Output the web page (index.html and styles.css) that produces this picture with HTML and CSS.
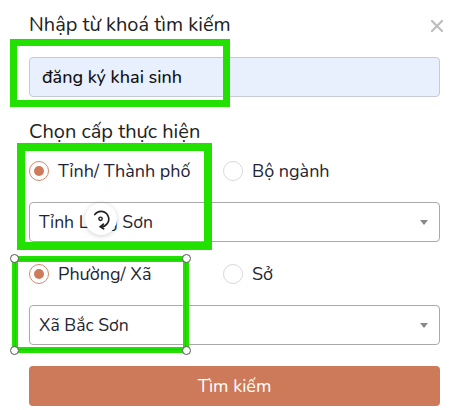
FILE: index.html
```html
<!DOCTYPE html>
<html lang="vi">
<head>
<meta charset="utf-8">
<link rel="stylesheet" href="styles.css">
</head>
<body>
<div class="modal">
  <button class="close" type="button" aria-label="Close">
    <svg width="12" height="12" viewBox="0 0 12 12"><path d="M1 1L11 11M11 1L1 11" stroke="#bdbdbd" stroke-width="2.2" stroke-linecap="round"/></svg>
  </button>
  <h2 class="title">Nhập từ khoá tìm kiếm</h2>
  <div class="field input">đăng ký khai sinh</div>
  <h3 class="label">Chọn cấp thực hiện</h3>
  <div class="radios">
    <label class="radio"><span class="dot checked"></span>Tỉnh/ Thành phố</label>
    <label class="radio"><span class="dot"></span>Bộ ngành</label>
  </div>
  <div class="field select">
    <span>Tỉnh Lạng Sơn</span><span class="caret"></span>
    <div class="spinner">
      <svg width="22" height="22" viewBox="0 0 20 20"><path d="M4.3 6A7 7 0 1 1 9.4 17" fill="none" stroke="#222" stroke-width="1.5" stroke-linecap="round"/><path d="M12.2 14.6L9.4 17L12.4 18.9" fill="none" stroke="#222" stroke-width="1.5" stroke-linecap="round" stroke-linejoin="round"/><circle cx="9.6" cy="9.8" r="1.5" fill="none" stroke="#222" stroke-width="1.3"/></svg>
    </div>
  </div>
  <div class="radios second">
    <label class="radio"><span class="dot checked"></span>Phường/ Xã</label>
    <label class="radio"><span class="dot"></span>Sở</label>
  </div>
  <div class="field select">
    <span>Xã Bắc Sơn</span><span class="caret"></span>
  </div>
  <button class="submit" type="button">Tìm kiếm</button>

  <div class="mark mark-a"></div>
  <div class="mark mark-b"></div>
  <div class="mark mark-c">
    <span class="handle h-tl"></span><span class="handle h-tr"></span>
    <span class="handle h-bl"></span><span class="handle h-br"></span>
  </div>
</div>
</body>
</html>
```

FILE: styles.css
```css
* { box-sizing: border-box; }
html, body { margin: 0; background: #fff; }
body {
  font-family: "Nunito", "Open Sans", "Noto Sans", sans-serif;
  color: #1f2533;
  width: 452px;
  height: 410px;
  overflow: hidden;
}
.modal {
  position: relative;
  padding: 12px 12px 0 29px;
}
.close {
  position: absolute;
  top: 19px;
  right: 8px;
  padding: 0;
  border: 0;
  background: none;
  width: 14px;
  height: 14px;
  display: flex;
  align-items: center;
  justify-content: center;
}
.title {
  margin: 0;
  font-size: 20px;
  font-weight: 400;
  line-height: 26px;
  color: #222;
}
.field {
  height: 40px;
  border: 1px solid #c9ccd1;
  border-radius: 4px;
  display: flex;
  align-items: center;
  font-size: 18px;
  padding: 0 12px;
  position: relative;
}
.input {
  margin-top: 19px;
  background: #e8f0fe;
  color: #111;
  font-weight: 500;
  border-color: #c6cbd3;
}
.label {
  margin: 22px 0 0;
  font-size: 20px;
  font-weight: 400;
  line-height: 26px;
  color: #222;
}
.radios {
  display: grid;
  grid-template-columns: 194px 1fr;
  margin-top: 14px;
  height: 24px;
  align-items: center;
}
.radio {
  display: flex;
  align-items: center;
  gap: 9px;
  font-size: 18px;
  color: #1f2533;
}
.dot {
  width: 20px;
  height: 20px;
  border-radius: 50%;
  border: 1.5px solid #d9d9d9;
  display: flex;
  align-items: center;
  justify-content: center;
  flex: none;
}
.dot.checked { border-color: #d08a6e; }
.dot.checked::after {
  content: "";
  width: 10px;
  height: 10px;
  border-radius: 50%;
  background: #cf7a5a;
}
.select {
  margin-top: 19px;
  background: #fff;
  border-color: #aaa;
  padding-left: 9px;
  font-size: 17.6px;
  justify-content: space-between;
}
.select + .radios { margin-top: 20px; }
.caret {
  width: 0; height: 0;
  border-left: 4px solid transparent;
  border-right: 4px solid transparent;
  border-top: 5px solid #888;
  margin-right: -1px;
}
.spinner {
  position: absolute;
  left: 55px;
  top: 0px;
  width: 32px;
  height: 32px;
  border-radius: 50%;
  background: #fff;
  box-shadow: 0 1px 5px rgba(0,0,0,0.18);
  display: flex;
  align-items: center;
  justify-content: center;
}
.submit {
  margin-top: 21px;
  width: 100%;
  height: 40px;
  border: 0;
  border-radius: 4px;
  background: #cd7a5a;
  color: #fff;
  font-family: inherit;
  font-size: 18px;
}
.mark {
  position: absolute;
  border: 7px solid #22e000;
}
.mark-a { left: 10px; top: 39px; width: 220px; height: 68px; }
.mark-b { left: 17px; top: 143px; width: 195px; height: 107px; border-width: 8px; }
.mark-c {
  left: 12px; top: 256px; width: 177px; height: 97px;
  border-width: 6px;
  outline: 1px solid #2bc010;
  outline-offset: -4px;
}
.handle {
  position: absolute;
  width: 9px;
  height: 9px;
  border-radius: 50%;
  background: #fff;
  border: 1px solid #555;
}
.h-tl { left: -8px; top: -8px; }
.h-tr { right: -8px; top: -8px; }
.h-bl { left: -8px; bottom: -8px; }
.h-br { right: -8px; bottom: -8px; }
```
